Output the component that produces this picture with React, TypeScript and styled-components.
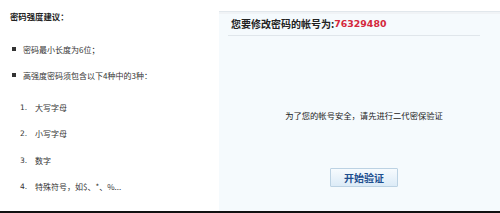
import React from 'react';
import styled, { createGlobalStyle } from 'styled-components';

const GlobalStyle = createGlobalStyle`
  html, body {
    margin: 0;
    padding: 0;
    background: #ffffff;
  }
  body {
    font-family: "Noto Sans CJK SC", "DejaVu Sans", sans-serif;
    color: #222;
  }
`;

const Page = styled.div`
  width: 500px;
  height: 213px;
  box-sizing: border-box;
  display: flex;
  border-bottom: 2px solid #111;
  overflow: hidden;
`;

const Tips = styled.div`
  width: 219px;
  flex-shrink: 0;
  box-sizing: border-box;
  padding: 10px 0 0 10px;
`;

const TipsTitle = styled.div`
  font-size: 8.4px;
  font-weight: bold;
  line-height: 12px;
  height: 12px;
`;

const BulletList = styled.ul`
  list-style: none;
  margin: 14px 0 0;
  padding: 0;
`;

const Bullet = styled.li`
  display: flex;
  align-items: center;
  height: 26px;
  font-size: 8px;
  color: #333;

  &::before {
    content: '';
    width: 4px;
    height: 4px;
    background: #333;
    margin: 0 7px 0 2px;
  }
`;

const NumberList = styled.ol`
  list-style: none;
  margin: 6px 0 0;
  padding: 0 0 0 10px;
`;

const NumberItem = styled.li`
  display: flex;
  align-items: center;
  height: 26.5px;
  font-size: 8px;
  color: #333;
`;

const Num = styled.span`
  width: 15px;
  font-family: "DejaVu Sans", sans-serif;
  font-size: 7.5px;
`;

const Panel = styled.div`
  flex: 1;
  margin-top: 11px;
  background: #f5fafd;
  border-top: 1px solid #e1e7ec;
  box-shadow: inset 0 2px 0 #f0f3f6;
  display: flex;
  flex-direction: column;
`;

const PanelHeader = styled.div`
  height: 23px;
  margin: 0 20px 0 9px;
  padding-left: 3px;
  border-bottom: 1px solid #e0e6eb;
  display: flex;
  align-items: center;
  font-size: 10px;
  font-weight: bold;
  color: #222;
`;

const Account = styled.span`
  color: #d4283c;
  font-family: "DejaVu Sans", sans-serif;
  font-size: 9.4px;
`;

const PanelBody = styled.div`
  padding: 73px 0 0 9px;
  display: flex;
  flex-direction: column;
  align-items: center;
`;

const Notice = styled.div`
  font-size: 8.3px;
  line-height: 12px;
  color: #222;
`;

const StartButton = styled.button`
  margin-top: 47px;
  width: 68px;
  height: 19px;
  padding: 0;
  border: 1px solid #bcd2e3;
  border-radius: 1px;
  background: linear-gradient(#f7fbfe, #dcebf7);
  color: #1e4f8f;
  font-family: "Noto Sans CJK SC", sans-serif;
  font-size: 10px;
  font-weight: bold;
  line-height: 17px;
`;

const App: React.FC = () => {
  return (
    <>
      <GlobalStyle />
      <Page>
        <Tips>
          <TipsTitle>密码强度建议：</TipsTitle>
          <BulletList>
            <Bullet>密码最小长度为6位；</Bullet>
            <Bullet>高强度密码须包含以下4种中的3种：</Bullet>
          </BulletList>
          <NumberList>
            <NumberItem><Num>1.</Num>大写字母</NumberItem>
            <NumberItem><Num>2.</Num>小写字母</NumberItem>
            <NumberItem><Num>3.</Num>数字</NumberItem>
            <NumberItem><Num>4.</Num>特殊符号，如$、*、%...</NumberItem>
          </NumberList>
        </Tips>
        <Panel>
          <PanelHeader>
            您要修改密码的帐号为:<Account>76329480</Account>
          </PanelHeader>
          <PanelBody>
            <Notice>为了您的帐号安全，请先进行二代密保验证</Notice>
            <StartButton>开始验证</StartButton>
          </PanelBody>
        </Panel>
      </Page>
    </>
  );
};

export default App;
